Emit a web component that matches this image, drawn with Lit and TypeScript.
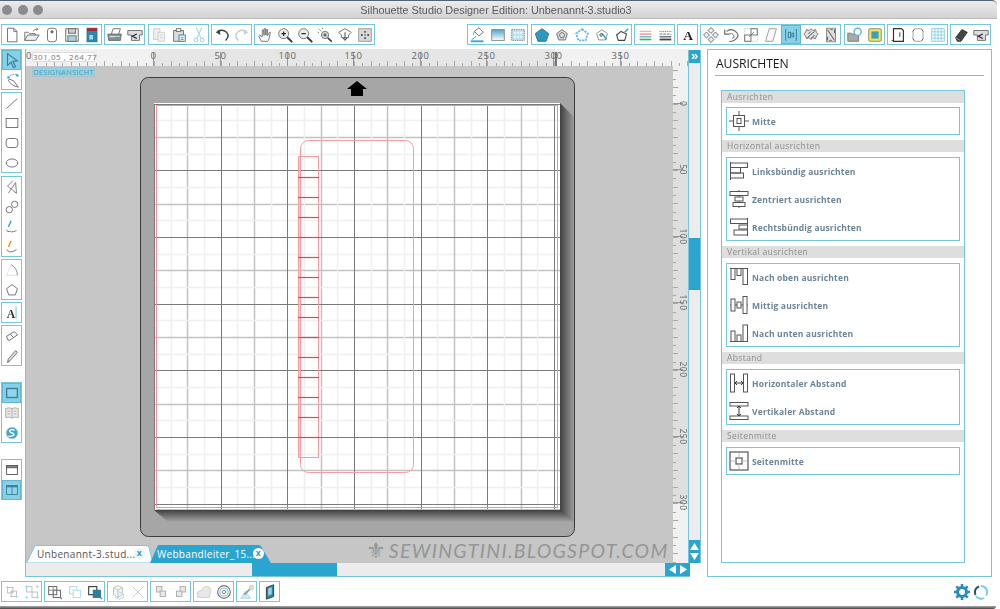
import { LitElement, html, css, svg } from "lit";
import { customElement } from "lit/decorators.js";

const B = "#2aa5d0";
const L = "#a8d8e8";

const ICONS: Record<string, any> = {
  new: svg`<path d="M5 2.5h7l3.5 3.5v11.5H5z"/><path d="M12 2.5V6h3.5"/>`,
  open: svg`<path d="M2 16V7h4l1.5 1.5h6V10"/><path d="M2 16l3-6h13l-4 6z" fill="#eee"/><path d="M11 6q2-3 5.500-2.500M15 2l1.500 1.500L15 5"/>`,
  sil: svg`<rect x="5" y="2.500" width="10" height="15" rx="3"/><circle cx="10" cy="6.500" r="1.300" fill="#666"/>`,
  save: svg`<path d="M3 3h14v14H3z" fill="#eee"/><rect x="6" y="3" width="8" height="5" fill="#ccc"/><rect x="5.500" y="11" width="9" height="6" fill="#a8d4e4"/>`,
  lib: svg`<rect x="4.500" y="2.500" width="11" height="15" fill="#2a87ad" stroke="#2a6f8d"/><rect x="4.500" y="2.500" width="11" height="3" fill="#b5262e" stroke="none"/><rect x="7" y="10" width="4" height="5" fill="#a8dcec" stroke="none"/>`,
  print: svg`<path d="M6 9l2-6h8l-2 6"/><path d="M2 9h15l-1 7H3z" fill="#8e8e8e"/><rect x="4" y="11" width="11" height="1.500" fill="#ddd" stroke="none"/><rect x="10" y="12" width="4" height="2" fill="${B}" stroke="none"/>`,
  send: svg`<path d="M2 5h16v5h-3v6H6v-6H2z" fill="#ddd"/><path d="M12 9l-5 2.500 5 2.500" stroke="#222" stroke-width="1.300"/>`,
  copy: svg`<g stroke="#ccc"><path d="M4 3h7v12H4z" fill="#eee"/><path d="M9 7h7v10H9z" fill="#f4f4f4"/></g><path d="M11 10h3M11 13h3" stroke="${L}"/>`,
  paste: svg`<path d="M4 5h11v12H4z" fill="#ddd"/><rect x="7" y="3" width="5" height="3" fill="#fff"/><rect x="10" y="10" width="7" height="7" fill="#e8f4f8" stroke="#3b7f9c"/><path d="M12 13h3M12 15h3" stroke="${B}"/>`,
  cut: svg`<g stroke="${L}" stroke-width="1.200"><path d="M7 2l5 11M13 2L8 13"/><circle cx="6.500" cy="15.500" r="2"/><circle cx="13.500" cy="15.500" r="2"/></g>`,
  undo: svg`<path d="M5 6q6-3 10 1t-1 9" stroke="#444" stroke-width="1.600"/><path d="M3 7l5-3v6z" fill="#444" stroke="none"/>`,
  redo: svg`<g stroke="#ccc"><path d="M15 6q-6-3-10 1t1 9" stroke-width="1.600"/></g><path d="M17 7l-5-3v6z" fill="#ccc" stroke="none"/>`,
  hand: svg`<path d="M6 17L3 11l1-1 3 2V4.500h1.500l.5 6V3h1.500l.5 7 .5-6H13l-.5 7 2.500-4h1l-2 9-1 1z"/>`,
  zin: svg`<circle cx="8.500" cy="8.500" r="5.500" fill="#eee"/><path d="M6 8.500h5M8.500 6v5" stroke="#222" stroke-width="1.300"/><path d="M12.500 12.500L18 18" stroke="#333" stroke-width="2"/>`,
  zout: svg`<circle cx="8.500" cy="8.500" r="5.500" fill="#eee"/><path d="M6 8.500h5" stroke="#222" stroke-width="1.300"/><path d="M12.500 12.500L18 18" stroke="#333" stroke-width="2"/>`,
  zsel: svg`<path d="M3 3l3 3M7 2l1 2M2 7l2 1" stroke-dasharray="1.500 1"/><circle cx="10" cy="10" r="4" fill="#ddd"/><circle cx="10" cy="10" r="1.300" fill="#555"/><path d="M13 13l4.500 4.500" stroke="#333" stroke-width="1.800"/>`,
  pan: svg`<path d="M10 3l7 4-3 3v3H6v-3L3 7z" fill="#fff"/><path d="M10 7v8M7.500 13l2.500 3 2.500-3" stroke="#333"/>`,
  fit: svg`<rect x="3" y="3" width="14" height="14" fill="#d8d8d8" stroke="#999"/><g fill="#333" stroke="none"><circle cx="10" cy="6.500" r="1"/><circle cx="10" cy="13.500" r="1"/><circle cx="6.500" cy="10" r="1"/><circle cx="13.500" cy="10" r="1"/><circle cx="10" cy="10" r=".7"/></g>`,
  fill: svg`<path d="M6 6l5-4 5 5-5 4z" fill="#fff"/><path d="M6 6q-1 3-1 4" stroke="${B}"/><path d="M2 17h14" stroke="${B}" stroke-width="2"/><path d="M3 15q3-1 5-4" stroke="${B}"/>`,
  grad: svg`<defs><linearGradient id="gd" x1="0" y1="0" x2="0" y2="1"><stop offset="0" stop-color="#4ba7c9"/><stop offset="1" stop-color="#fff"/></linearGradient></defs><rect x="3" y="4" width="14" height="12" fill="url(#gd)" stroke="#888"/>`,
  pat: svg`<rect x="3" y="4" width="14" height="12" fill="#bfe3ef" stroke="#777" stroke-dasharray="1.500 1"/><g fill="#fff" stroke="none"><circle cx="6.500" cy="7.500" r="1"/><circle cx="10" cy="7.500" r="1"/><circle cx="13.500" cy="7.500" r="1"/><circle cx="6.500" cy="12" r="1"/><circle cx="10" cy="12" r="1"/><circle cx="13.500" cy="12" r="1"/></g>`,
  pfill: svg`<path d="M10 3l7.500 5.500-3 8.500h-9l-3-8.500z" fill="#2d99bd" stroke="#2b6e88"/>`,
  pline: svg`<path d="M10 4l6 4.500-2.300 7H6.300L4 8.500z" fill="#ddd"/><path d="M10 7l3 2.300-1.200 3.700H8.200L7 9.300z"/>`,
  pdash: svg`<path d="M10 3.500l6.500 5-2.500 7.500H6L3.500 8.500z" stroke="#5cc0de" stroke-width="2" stroke-dasharray="2.500 1"/>`,
  pstar: svg`<path d="M10 4l6 4.500-2.300 7H6.300L4 8.500z" stroke="#888"/><path d="M10 8l5 7" stroke="${B}" stroke-width="1.600"/><circle cx="9" cy="10" r="1.500" fill="#ccc"/>`,
  ppen: svg`<path d="M9 6l6 3-2 7H6L4 10z" stroke="#444" stroke-width="1.200"/><path d="M13 7l4-4" stroke="${B}" stroke-width="1.600"/>`,
  lcol: svg`<path d="M4 6h13" stroke="#f2b79a" stroke-width="1.500"/><path d="M4 9h13" stroke="#f28b82" stroke-width="1.500"/><path d="M4 12h13" stroke="#5db7d6" stroke-width="1.500"/><path d="M4 15h13" stroke="#41b24b" stroke-width="1.800"/>`,
  ldash: svg`<path d="M4 6h13" stroke="#555" stroke-dasharray="1 1"/><path d="M4 9h13" stroke="#666" stroke-dasharray="3 1"/><path d="M4 12h13" stroke="#666" stroke-width="1.500"/><path d="M4 15h13" stroke="#444" stroke-width="2"/>`,
  atext: svg`<text x="10" y="15.500" text-anchor="middle" font-family="Liberation Serif" font-weight="700" font-size="15" fill="#222" stroke="none">A</text>`,
  move: svg`<g fill="#eee"><rect x="7.700" y="2.700" width="4.600" height="4.600" transform="rotate(45 10 5)"/><rect x="7.700" y="12.700" width="4.600" height="4.600" transform="rotate(45 10 15)"/><rect x="2.700" y="7.700" width="4.600" height="4.600" transform="rotate(45 5 10)"/><rect x="12.700" y="7.700" width="4.600" height="4.600" transform="rotate(45 15 10)"/></g>`,
  rot: svg`<path d="M5 6q5-4 10 0t1 8-8 3" stroke-width="1.300"/><path d="M3 4v5h5" stroke-width="1.300"/><path d="M8 9q3-2 5 1t-2 4"/>`,
  scale: svg`<rect x="3" y="3" width="14" height="14" stroke="${L}" stroke-dasharray="1.500 1"/><rect x="3" y="10" width="7" height="7"/><rect x="10" y="3" width="7" height="7"/><path d="M8 12l5-5"/>`,
  shear: svg`<path d="M8 3h8l-4 14H4z" fill="#fafafa" stroke="#999"/>`,
  align: svg`<g stroke="#3a7d98"><path d="M5 4H4v12h1M15 4h1v12h-1"/><rect x="7" y="7" width="2.500" height="6"/><rect x="11" y="8" width="2" height="4"/></g>`,
  repl: svg`<path d="M10 3l2 2 3-1 1 3 2 2-2 2-1 3-3-1-2 2-2-2-3 1-1-3-2-2 2-2 1-3 3 1z" fill="#e4e4e4"/><path d="M6 13l8-7M7 9l3-3M10 14l4-4" stroke="#444"/>`,
  nest: svg`<rect x="5" y="2.500" width="10" height="15" fill="#ddd" stroke="#888"/><path d="M6 4l8 12M14 4v4M6 16v-4" stroke="#444"/><path d="M9 4h3M8 16h3"/>`,
  folder: svg`<path d="M2 8h4l1 1h7v8H2z" fill="#aaa" stroke="#777"/><circle cx="13" cy="6.500" r="4" fill="#fff" stroke="#5cb8d6" stroke-width="1.500"/>`,
  color: svg`<rect x="3" y="3" width="14" height="14" rx="1.500" fill="#f7e54e" stroke="#888"/><rect x="6" y="6" width="8" height="8" fill="#3a9ec0" stroke="none"/>`,
  page: svg`<path d="M5 3h9l2 2v12H5z" stroke="#333" stroke-width="1.300"/><path d="M12 7v5M3 16h2" stroke="#333"/>`,
  pager: svg`<rect x="4.500" y="3" width="11" height="14" rx="3" stroke="#999"/><path d="M4 6l2-2M14 4l2 2M4 14l2 2M14 16l2-2" stroke="#555"/>`,
  gridb: svg`<g stroke="#87cfe4"><rect x="3" y="3" width="14" height="14"/><path d="M3 6.500h14M3 10h14M3 13.500h14M6.500 3v14M10 3v14M13.500 3v14"/></g>`,
  erase: svg`<path d="M4 13l7-9 6 3-7 10H6z" fill="#444" stroke="#333"/><path d="M4 13l5 3" stroke="#999"/>`,
  sel: svg`<path d="M5 3l11 8-5 .500 3 6-2.500 1-2.500-6L5 16z" stroke="#3a7d98" stroke-width="1.200"/>`,
  node: svg`<path d="M6 8q2-5 10-4" stroke="${B}" stroke-dasharray="2 1"/><path d="M7 9l5 2 5 7-6-2-5-5z"/><circle cx="6" cy="7" r="1.300" fill="${B}" stroke="none"/><circle cx="16" cy="5" r="1.300" fill="${B}" stroke="none"/>`,
  line: svg`<path d="M4 16L16 5"/>`,
  rect: svg`<rect x="3.500" y="5" width="13" height="10"/>`,
  rrect: svg`<rect x="3.500" y="5" width="13" height="10" rx="3"/>`,
  ell: svg`<ellipse cx="10" cy="10" rx="6.500" ry="4.500"/>`,
  poly: svg`<path d="M11 3L5 9l10 8-1-12L6 17" stroke="#777"/>`,
  curve: svg`<circle cx="7" cy="13" r="3.500"/><circle cx="13" cy="7" r="3.500"/>`,
  free: svg`<path d="M6 10l3-7" stroke="${B}" stroke-width="1.500"/><path d="M4 13q1 3 3 2t2 0 3 0 3-1"/>`,
  smooth: svg`<path d="M6 10l3-7" stroke="#f18a1e" stroke-width="1.500"/><path d="M4 13q3 4 7 2t4-2"/>`,
  arc: svg`<path d="M4 16L9 4" stroke="#e0e0e0"/><path d="M9 4q7 4 7 12" stroke="#888"/><path d="M4 16h12" stroke="#e0e0e0"/>`,
  pent: svg`<path d="M10 4l6 4.500-2.300 7H6.300L4 8.500z"/>`,
  text: svg`<text x="9" y="15" text-anchor="middle" font-family="Liberation Serif" font-weight="700" font-size="13" fill="#333" stroke="none">A</text><path d="M14.500 3v13" stroke="#5cb8d6"/>`,
  eraser: svg`<path d="M4 11l8-6 4 3-8 7H6z" transform="rotate(6 10 10)"/><path d="M8 8l4 4"/>`,
  knife: svg`<path d="M5 17l1-4 8-9 2 2-8 9z" fill="#ddd"/><path d="M5 17l2-1"/>`,
  view: svg`<rect x="4" y="5" width="12" height="10" fill="#8fd4e8" stroke="#3d7f9b" stroke-width="1.500"/>`,
  book: svg`<path d="M3 5q4-1.500 7 0 3-1.500 7 0v10q-4-1-7 .5-3-1.500-7-.5z" fill="#e8e8e8" stroke="#aaa"/><path d="M10 5v10" stroke="#aaa"/><path d="M5 8h3M5 11h3M12 8h3M12 11h3" stroke="#aaa"/>`,
  scirc: svg`<circle cx="10" cy="10" r="6.500" fill="#3aa9cf" stroke="#ccc"/><path d="M13 7q-3-1.500-5 0t2 3 1 3-5 0" stroke="#fff" stroke-width="1.500"/>`,
  win: svg`<rect x="4" y="5" width="12" height="10" stroke="#555"/><rect x="4" y="5" width="12" height="2.500" fill="#888" stroke="#555"/>`,
  split: svg`<rect x="4" y="5" width="12" height="10" fill="#8fd4e8" stroke="#3d7f9b"/><path d="M10 5v10" stroke="#3d7f9b"/><rect x="4" y="5" width="12" height="2" fill="#3d7f9b" stroke="none"/>`,
  grp: svg`<g stroke="#bbb"><rect x="5" y="5" width="6" height="6"/><rect x="9" y="9" width="6" height="6"/><path d="M3 5h4M5 3v4M13 15h4M15 13v4" stroke="${L}"/></g>`,
  ugrp: svg`<g stroke="#bbb"><rect x="4" y="4" width="6" height="6"/><rect x="10" y="10" width="6" height="6"/><path d="M2 4h4M4 2v4M14 16h4M16 14v4M14 4h4M16 2v4M2 16h4M4 14v4" stroke="${L}"/></g>`,
  arr: svg`<rect x="3" y="4" width="9" height="9" stroke="#555"/><rect x="8" y="8" width="8" height="8" stroke="#555"/><path d="M3 8h9M8 4v9" stroke="#888"/><circle cx="17" cy="17" r="1" fill="#2a87ad" stroke="none"/>`,
  front: svg`<g stroke="${L}"><rect x="4" y="4" width="8" height="8"/><rect x="8" y="8" width="8" height="8" fill="#fff"/></g>`,
  back: svg`<rect x="3" y="4" width="9" height="9" stroke="#444" stroke-width="1.300"/><rect x="8" y="8" width="8" height="8" fill="#2a7f9f" stroke="#2a6f8d"/><circle cx="17" cy="17" r="1" fill="#2a87ad" stroke="none"/>`,
  cube: svg`<g stroke="#c0c0c0"><path d="M5 5l5-2 5 2v8l-5 3-5-3z" fill="#f5f5f5"/><path d="M5 5l5 3 5-3M10 8v8"/><path d="M11 10l5 2v4l-5 2-5-2" stroke="${L}"/></g>`,
  xx: svg`<path d="M4 4l12 12M16 4L4 16" stroke="#ccc"/>`,
  wa: svg`<g stroke="#aaa" fill="#e8e8e8"><rect x="5" y="4" width="6" height="6"/><rect x="9" y="9" width="6" height="6"/></g>`,
  wb: svg`<g stroke="#aaa" fill="#e8e8e8"><rect x="9" y="4" width="6" height="6"/><rect x="5" y="9" width="6" height="6"/></g>`,
  weld: svg`<path d="M3 16v-6l5-2q1-5 6-4t3 7l-1 5z" fill="#e8e8e8" stroke="#ccc"/>`,
  target: svg`<g stroke="#777"><circle cx="10" cy="10" r="7" stroke-width="1.300"/><circle cx="10" cy="10" r="4.500" stroke="#5cb8d6"/><circle cx="10" cy="10" r="2"/></g>`,
  brush: svg`<path d="M3 17h11L8 9z" fill="#cfeaf3" stroke="${L}"/><path d="M7 13L14 6" stroke="#999" stroke-width="2"/><circle cx="15" cy="5" r="2.500" fill="#ddd" stroke="#ccc"/>`,
  tri: svg`<path d="M6 5l8-3v13l-8 3z" fill="#2a87ad" stroke="#333"/><path d="M8 6l4-1.500v8L8 14z" fill="#8fd4e8" stroke="none"/>`,
};

const AI: Record<string, any> = {
  mitte: svg`<rect x="4.500" y="4.500" width="11" height="11"/><rect x="8" y="7.500" width="4" height="5"/><path d="M0 10h4.500M15.500 10H20M10 0v4.500M10 15.500V20"/>`,
  links: svg`<path d="M1.500 1v18"/><rect x="1.500" y="2" width="17" height="4.500"/><rect x="1.500" y="6.500" width="10" height="5.500"/><rect x="1.500" y="12" width="13" height="5"/>`,
  zent: svg`<path d="M10 1v1.500M10 6.500V8M10 12v1.500M10 17.500V19"/><rect x="1" y="2.500" width="18" height="4"/><rect x="6" y="8" width="8" height="4"/><rect x="4" y="13.500" width="12" height="4"/>`,
  rechts: svg`<path d="M18.500 1v18"/><rect x="1.500" y="2" width="17" height="4.500"/><rect x="10" y="8" width="8.500" height="4"/><rect x="5" y="13" width="13.500" height="5"/>`,
  oben: svg`<path d="M1 1.500h18"/><rect x="2" y="1.500" width="4" height="11"/><rect x="8" y="1.500" width="4" height="7"/><rect x="14" y="1.500" width="4.500" height="16"/>`,
  mittig: svg`<path d="M1 10h1M6 10h2M12 10h2M18 10h1"/><rect x="2" y="4" width="4" height="12"/><rect x="8" y="7" width="4" height="6"/><rect x="14" y="1.500" width="4" height="17"/>`,
  unten: svg`<path d="M1 18.500h18"/><rect x="2" y="8" width="4" height="10.500"/><rect x="8" y="12" width="4" height="6.500"/><rect x="14" y="2" width="4.500" height="16.500"/>`,
  hab: svg`<rect x="1.500" y="1" width="4" height="18"/><rect x="14.500" y="1" width="4" height="18"/><path d="M6 10h8M8 8l-2 2 2 2M12 8l2 2-2 2" stroke="#333"/>`,
  vab: svg`<rect x="1" y="1.500" width="18" height="3.500"/><rect x="1" y="15" width="18" height="3.500"/><path d="M10 5v10M8 7l2-2 2 2M8 13l2 2 2-2" stroke="#333"/>`,
  seite: svg`<rect x="1" y="1" width="18" height="18" stroke-width="1.200"/><rect x="7" y="7" width="6" height="6" stroke-width="1.200"/><path d="M2 10h5M13 10h5M10 2v5M10 13v5" stroke="#bbb"/>`,
};

const TOP_L = [
  ["new", "open", "sil", "save", "lib"],
  ["print", "send"],
  ["copy", "paste", "cut"],
  ["undo", "redo"],
  ["hand", "zin", "zout", "zsel", "pan", "fit"],
];
const TOP_R = [
  ["fill", "grad", "pat"],
  ["pfill", "pline", "pdash", "pstar", "ppen"],
  ["lcol", "ldash"],
  ["atext"],
  ["move", "rot", "scale", "shear", "*align", "repl", "nest"],
  ["folder", "color"],
  ["page", "pager", "gridb"],
  ["erase", "send"],
];
const LEFT: { cls: string; icons: string[] }[] = [
  { cls: "", icons: ["*sel", "node"] },
  { cls: "", icons: ["line", "rect", "rrect", "ell"] },
  { cls: "g3", icons: ["poly", "curve", "free", "smooth"] },
  { cls: "", icons: ["arc", "pent"] },
  { cls: "", icons: ["text"] },
  { cls: "", icons: ["eraser", "knife"] },
  { cls: "g16", icons: ["*view", "book", "scirc"] },
  { cls: "g16", icons: ["win", "*split"] },
];
const BOTTOM = [
  ["grp", "ugrp"],
  ["arr", "front", "back"],
  ["cube", "xx"],
  ["wa", "wb"],
  ["weld", "target"],
  ["brush"],
  ["tri"],
];
const SECTIONS: { title: string; rows: [string, string][] }[] = [
  { title: "Ausrichten", rows: [["mitte", "Mitte"]] },
  {
    title: "Horizontal ausrichten",
    rows: [
      ["links", "Linksbündig ausrichten"],
      ["zent", "Zentriert ausrichten"],
      ["rechts", "Rechtsbündig ausrichten"],
    ],
  },
  {
    title: "Vertikal ausrichten",
    rows: [
      ["oben", "Nach oben ausrichten"],
      ["mittig", "Mittig ausrichten"],
      ["unten", "Nach unten ausrichten"],
    ],
  },
  {
    title: "Abstand",
    rows: [
      ["hab", "Horizontaler Abstand"],
      ["vab", "Vertikaler Abstand"],
    ],
  },
  { title: "Seitenmitte", rows: [["seite", "Seitenmitte"]] },
];

const range = (n: number) => Array.from({ length: n }, (_, i) => i);
const X0 = 155;
const Y0 = 103.5;
const MM = 16.6667;

function gridLines() {
  const style = (k: number) =>
    k % 4 === 0
      ? { s: "#7a7a7a", w: 1 }
      : k % 2 === 0
      ? { s: "#c2c2c2", w: 1.5 }
      : { s: "#f0f0f0", w: 1.5 };
  const order = range(25).sort((a, b) => (a % 4 === 0 ? 1 : 0) - (b % 4 === 0 ? 1 : 0));
  return order.map((k) => {
    const st = style(k);
    const x = Math.round(X0 + k * MM) + 0.5;
    const y = Math.round(Y0 + k * MM) + 0.5;
    return svg`<path d="M${x} 104V510" stroke=${st.s} stroke-width=${st.w}/><path d="M155 ${y}H561" stroke=${st.s} stroke-width=${st.w}/>`;
  });
}

@customElement("app-root")
export class AppRoot extends LitElement {
  static styles = css`
    :host { display: block; width: 1000px; height: 609px; background: #fff; overflow: hidden; font-family: "Open Sans", "Liberation Sans", sans-serif; }
    svg.i { fill: none; stroke: #6a6a6a; stroke-width: 1; overflow: visible; display: block; flex: none; }
    .win { width: 1000px; height: 609px; display: flex; flex-direction: column; position: relative; filter: blur(.3px); }
    .title { height: 19px; width: 997px; box-sizing: border-box; border-top: 1px solid #4f6674; border-radius: 0 5px 0 0; background: linear-gradient(#ececec, #d2d2d2); border-bottom: 1px solid #bdbdbd; display: flex; align-items: center; position: relative; flex: none; }
    .lights { display: flex; gap: 5.500px; padding-left: 2px; margin-top: 1px; }
    .lights i { width: 10px; height: 10px; border-radius: 50%; background: #8b8b8e; display: block; }
    .title-text { position: absolute; left: 0; right: 5px; text-align: center; font-size: 10.850px; color: #5a5a5a; font-family: "Liberation Sans", sans-serif; margin-top: 1px; }
    .toolbar { display: flex; justify-content: space-between; margin-top: 5px; padding: 0 8.700px 0 1px; height: 21px; flex: none; }
    .cluster { display: flex; gap: 2.300px; }
    .grp { display: flex; border: 1px solid #76c6df; box-sizing: border-box; height: 21px; }
    .cell { width: 20px; height: 19px; display: flex; align-items: center; justify-content: center; flex: none; }
    .cell:last-child { margin-right: -1px; }
    .cell.on { background: #86d0e8; box-shadow: inset 0 0 0 1px #63b7d3; }
    .main { display: flex; margin-top: 4px; height: 528px; flex: none; }
    .left { width: 25px; padding-left: 1px; box-sizing: border-box; flex: none; display: flex; flex-direction: column; gap: 2px; }
    .vgrp { width: 21px; border: 1px solid #76c6df; box-sizing: border-box; }
    .vgrp .cell { width: 19px; height: 20px; margin: 0; }
    .vgrp .cell:last-child { margin-bottom: -1px; }
    .g3 { margin-top: 1px; }
    .g16 { margin-top: 14px; }
    .work { width: 677px; flex: none; display: flex; flex-direction: column; border-left: 1px solid #76c6df; box-sizing: border-box; }
    .upper { flex: 1; display: flex; min-height: 0; }
    .midcol { width: 662px; display: flex; flex-direction: column; flex: none; }
    .hruler { height: 17px; flex: none; position: relative; }
    .hruler svg, .vruler svg, .canvas svg.art { display: block; }
    .coords { position: absolute; left: 6px; top: 3px; width: 63px; height: 10px; box-sizing: border-box; background: #fff; border: 1px solid #ddd; border-radius: 1px; font-size: 8px; line-height: 8px; color: #777; letter-spacing: .55px; text-align: center; white-space: nowrap; }
    .below { flex: 1; display: flex; min-height: 0; }
    .canvas { width: 647px; height: 497px; background: #c6c6c6; position: relative; flex: none; overflow: hidden; }
    .badge { position: absolute; left: 6px; top: 1px; width: 63px; height: 10px; box-sizing: border-box; background: #8fd5ea; border: 1px solid #a6c6d0; font-size: 7.500px; line-height: 8px; color: #5f97ad; letter-spacing: .2px; text-align: center; white-space: nowrap; }
    .mark { position: absolute; left: 340px; top: 473px; display: flex; align-items: center; gap: 3px; color: #959595; white-space: nowrap; }
    .mark b { font: 400 22px/24px "DejaVu Sans", sans-serif; }
    .mark span { font: italic 400 19.500px/24px "Lato", sans-serif; letter-spacing: 1.300px; }
    .tab { position: absolute; bottom: 0; height: 18px; font-size: 10px; line-height: 19px; white-space: nowrap; letter-spacing: .3px; }
    .tab svg { position: absolute; left: 0; top: 0; display: block; }
    .tab span { position: relative; }
    .tab em { position: absolute; top: 3px; width: 11px; height: 11px; border-radius: 50%; font: 700 9px/11px "Liberation Sans", sans-serif; text-align: center; color: #2a8fc0; background: #fff; }
    .t1 { left: 0; width: 128px; color: #555; }
    .t1 span { left: 11px; }
    .t1 em { left: 108px; background: #f2f2f2; }
    .t2 { left: 124px; width: 122px; color: #fff; }
    .t2 span { left: 7px; }
    .t2 em { left: 103px; }
    .vruler { width: 15px; flex: none; }
    .vscroll { width: 13px; flex: none; margin-top: 1px; box-sizing: border-box; background: #ececec; border-left: 1px solid #76c6df; border-right: 1px solid #76c6df; display: flex; flex-direction: column; position: relative; }
    .more { height: 13px; background: #2aa5d0; color: #fff; font: 700 13px/11px "Liberation Sans", sans-serif; text-align: center; flex: none; }
    .sp1 { height: 175px; flex: none; }
    .thumb { height: 52px; background: #2aa5d0; flex: none; }
    .sp2 { flex: 1; }
    .arrows { height: 23px; background: #2aa5d0; flex: none; display: flex; flex-direction: column; align-items: center; justify-content: center; gap: 3px; }
    .hscroll { height: 13px; flex: none; display: flex; background: #ececec; border-bottom: 1px solid #76c6df; width: 664px; }
    .hsp { width: 226px; flex: none; }
    .hthumb { width: 85px; background: #2aa5d0; flex: none; }
    .harrows { margin-left: auto; width: 25px; background: #2aa5d0; display: flex; align-items: center; justify-content: center; gap: 4px; flex: none; }
    .panel { width: 285px; margin-left: 5px; flex: none; height: 528px; box-sizing: border-box; border: 1px solid #76c6df; padding: 0 7px; }
    .ptitle { height: 26px; box-sizing: border-box; border-bottom: 1px solid #76c6df; font: 500 12.200px/27px "Open Sans", sans-serif; color: #1a1a1a; letter-spacing: -.1px; padding-left: 1px; }
    .inner { width: 244px; height: 473px; margin: 14px 0 0 6px; box-sizing: border-box; border: 1px solid #76c6df; }
    .sh { height: 12px; background: #dedede; font-size: 8.500px; line-height: 12px; color: #8f8f8f; padding-left: 5px; letter-spacing: .38px; }
    .sbox { margin: 5px 4px; border: 1px solid #76c6df; }
    .sec:first-child .sbox { margin-top: 4px; }
    .row { height: 28px; display: flex; align-items: center; padding-left: 2px; gap: 3px; font-size: 8.500px; font-weight: 700; color: #6d8497; letter-spacing: .18px; }
    .row:first-child { margin-top: -1px; }
    .row:last-child { margin-bottom: -1px; }
    .row svg.i { stroke: #555; }
    .foot { display: flex; margin-top: 4px; padding: 0 0 0 1px; gap: 2px; height: 21px; align-items: center; flex: none; position: relative; }
    .tools { margin-left: auto; display: flex; gap: 3px; padding-right: 11px; align-items: center; }
    .edge { position: absolute; left: 0; width: 996px; bottom: 0; height: 3px; background: linear-gradient(#aaa, #444); border-radius: 0 0 4px 0; }
  `;

  private icon(name: string) {
    const on = name.startsWith("*");
    const n = on ? name.slice(1) : name;
    return html`<div class="cell ${on ? "on" : ""}"><svg class="i" width="18" height="18" viewBox="0 0 20 20">${ICONS[n]}</svg></div>`;
  }

  private group(icons: string[]) {
    return html`<div class="grp">${icons.map((i) => this.icon(i))}</div>`;
  }

  private hruler() {
    return html`<svg width="662" height="17" viewBox="27 49 662 17">
      <rect x="27" y="49" width="662" height="17" fill="#f1f1f1"/>
      <rect x="155" y="49" width="401" height="17" fill="#e6e6e6"/>
      ${range(80).map((k) => {
        const x = Math.round(X0 - 8.3333 * 14 + k * 8.3333) + 0.5;
        const h = k % 2 === 0 ? 5 : 3;
        return svg`<path d="M${x} ${66 - h}V66" stroke="#a8a8a8"/>`;
      })}
      ${range(8).map((k) => {
        const x = Math.round(154.3 + k * 66.6) + 0.5;
        return svg`<path d="M${x} 52V66" stroke="#999"/><text x=${x} y="59" text-anchor="middle" font-family="Open Sans" font-size="9.500" letter-spacing=".6" fill="#666">${k * 50}</text>`;
      })}
      <path d="M557 52V66" stroke="#777" stroke-width="2"/>
      <text x="27" y="59" font-family="Open Sans" font-size="9.500" fill="#666">0</text>
    </svg>`;
  }

  private vruler() {
    return html`<svg width="15" height="497" viewBox="674 66 15 497">
      <rect x="674" y="66" width="15" height="497" fill="#f1f1f1"/>
      <rect x="674" y="103" width="15" height="401" fill="#dfdfdf"/>
      ${range(60).map((k) => {
        const y = Math.round(Y0 - 8.3333 * 4 + k * 8.3333) + 0.5;
        const w = k % 2 === 0 ? 5 : 3;
        return svg`<path d="M674 ${y}H${674 + w}" stroke="#a8a8a8"/>`;
      })}
      ${range(7).map((k) => {
        const y = Math.round(102.5 + k * 66.6) + 0.5;
        return svg`<path d="M674 ${y}H684" stroke="#999"/><text transform="translate(681 ${y}) rotate(90)" text-anchor="middle" font-family="Open Sans" font-size="8.500" letter-spacing=".4" fill="#666">${k * 50}</text>`;
      })}
    </svg>`;
  }

  private art() {
    const rungs = range(14).map((k) => 176.5 + k * 20.05);
    return html`<svg class="art" width="647" height="497" viewBox="27 66 647 497">
      <defs>
        <linearGradient id="sr" x1="0" y1="0" x2="1" y2="0"><stop offset="0" stop-color="#3f3f3f"/><stop offset="1" stop-color="#9c9c9c"/></linearGradient>
        <linearGradient id="sb" x1="0" y1="0" x2="0" y2="1"><stop offset="0" stop-color="#3f3f3f"/><stop offset="1" stop-color="#a6a6a6"/></linearGradient>
      </defs>
      <rect x="141.500" y="77.500" width="434" height="459" rx="8" fill="#a6a6a6" stroke="#3c3c3c"/>
      <path d="M561 103l14 14V522H561z" fill="url(#sr)"/>
      <path d="M155 510H561l14 12H169z" fill="url(#sb)"/>
      <path d="M358 81l10 8h-4v7h-12v-7h-4z" fill="#000"/>
      <rect x="155" y="103" width="406" height="407" fill="#fff"/>
      ${gridLines()}
      <rect x="157.500" y="105.500" width="401" height="402" fill="none" stroke="#f78f99"/>
      <path d="M157 509.500H561" stroke="#f7a8ae"/>
      <rect x="299" y="156" width="3" height="301" fill="#ffb8be" opacity=".6"/>
      <rect x="299.500" y="156.500" width="20" height="301" fill="none" stroke="#fa9aa3"/>
      <rect x="301.500" y="140.500" width="113" height="332" rx="8" fill="none" stroke="#fb9ca5"/>
      ${rungs.map((y) => svg`<path d="M299 ${Math.round(y) + 0.5}H320" stroke="#f4404e" stroke-width="1.200"/>`)}
    </svg>`;
  }

  render() {
    return html`<div class="win">
      <div class="title">
        <div class="lights"><i></i><i></i><i></i></div>
        <div class="title-text">Silhouette Studio Designer Edition: Unbenannt-3.studio3</div>
      </div>
      <div class="toolbar">
        <div class="cluster">${TOP_L.map((g) => this.group(g))}</div>
        <div class="cluster">${TOP_R.map((g) => this.group(g))}</div>
      </div>
      <div class="main">
        <div class="left">
          ${LEFT.map(
            (g) => html`<div class="vgrp ${g.cls}">${g.icons.map((i) => this.icon(i))}</div>`
          )}
        </div>
        <div class="work">
          <div class="upper">
            <div class="midcol">
              <div class="hruler">${this.hruler()}<div class="coords">301,05 , 264,77</div></div>
              <div class="below">
                <div class="canvas">
                  ${this.art()}
                  <div class="badge">DESIGNANSICHT</div>
                  <div class="mark"><b>⚜</b><span>SEWINGTINI.BLOGSPOT.COM</span></div>
                  <div class="tab t1">
                    <svg width="128" height="18"><path d="M.5 18L9 .5H120q2 0 3 2L127 18z" fill="#fff" stroke="#76c6df"/></svg>
                    <span>Unbenannt-3.stud...</span><em>x</em>
                  </div>
                  <div class="tab t2">
                    <svg width="122" height="18"><path d="M0 18L8 0H108q3 0 4 3L121 18z" fill="#2aa5d0"/></svg>
                    <span>Webbandleiter_15...</span><em>x</em>
                  </div>
                </div>
                <div class="vruler">${this.vruler()}</div>
              </div>
            </div>
            <div class="vscroll">
              <div class="more">»</div>
              <div class="sp1"></div>
              <div class="thumb"></div>
              <div class="sp2"></div>
              <div class="arrows">
                <svg width="9" height="7"><path d="M4.500 0L9 7H0z" fill="#fff"/></svg>
                <svg width="9" height="7"><path d="M4.500 7L9 0H0z" fill="#fff"/></svg>
              </div>
            </div>
          </div>
          <div class="hscroll">
            <div class="hsp"></div>
            <div class="hthumb"></div>
            <div class="harrows">
              <svg width="7" height="9"><path d="M0 4.500L7 0V9z" fill="#fff"/></svg>
              <svg width="7" height="9"><path d="M7 4.500L0 0V9z" fill="#fff"/></svg>
            </div>
          </div>
        </div>
        <div class="panel">
          <div class="ptitle">AUSRICHTEN</div>
          <div class="inner">
            ${SECTIONS.map(
              (s) => html`<div class="sec">
                <div class="sh">${s.title}</div>
                <div class="sbox">
                  ${s.rows.map(
                    ([ic, label]) => html`<div class="row">
                      <svg class="i" width="20" height="20" viewBox="0 0 20 20">${AI[ic]}</svg>
                      <span>${label}</span>
                    </div>`
                  )}
                </div>
              </div>`
            )}
          </div>
        </div>
      </div>
      <div class="foot">
        ${BOTTOM.map((g) => this.group(g))}
        <div class="tools">
          <svg width="16" height="16" viewBox="0 0 16 16"><circle cx="8" cy="8" r="4.500" fill="none" stroke="#2a8dbd" stroke-width="3"/><path d="M8 0v3M8 13v3M0 8h3M13 8h3M2.300 2.300l2.200 2.200M11.500 11.500l2.200 2.200M13.700 2.300l-2.200 2.200M4.500 11.500l-2.200 2.200" stroke="#2a8dbd" stroke-width="2.500"/></svg>
          <svg width="16" height="16" viewBox="0 0 16 16" fill="none"><path d="M8 2a6 6 0 0 1 5 9.500" stroke="#7fcde4" stroke-width="2"/><path d="M11 14a6 6 0 0 1-8-2" stroke="#7fcde4" stroke-width="2"/><path d="M2.500 11A6 6 0 0 1 6 2.500" stroke="#24505f" stroke-width="2"/></svg>
        </div>
      </div>
      <div class="edge"></div>
    </div>`;
  }
}
